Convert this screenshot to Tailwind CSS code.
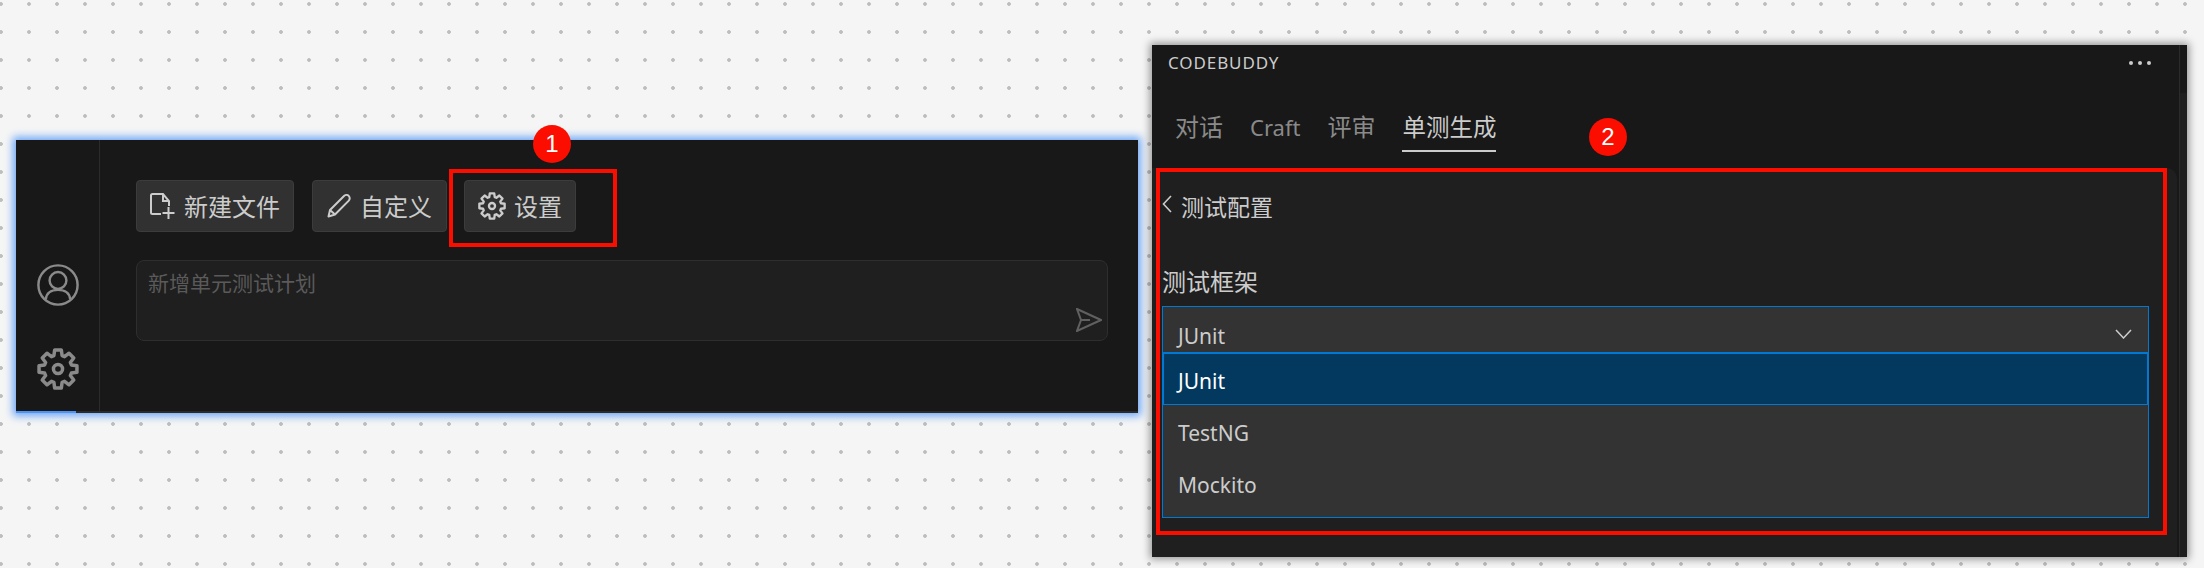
<!DOCTYPE html>
<html lang="zh-CN">
<head>
<meta charset="utf-8">
<title>CodeBuddy 单测生成</title>
<script src="https://cdn.jsdelivr.net/npm/@tailwindcss/browser@4"></script>
</head>
<body class="bg-[#f5f5f5]">
<div class="relative w-[2204px] h-[568px] overflow-hidden flex items-start font-['Noto_Sans','Noto_Sans_CJK_SC',sans-serif] bg-[radial-gradient(circle,#bdbdbd_1.5px,transparent_2.2px)] bg-[length:28px_28px] bg-[position:-13px_-10px]">

  <!-- Left panel -->
  <div class="relative ml-[16px] mt-[140px] w-[1122px] h-[273px] flex bg-[#181818] border-b-2 border-[#2b2b2b] shadow-[0_0_8px_3px_#6aa5f7]">
    <div class="w-[84px] flex flex-col items-center justify-end gap-[42px] pb-[21px] border-r border-[#2b2b2b]">
      <svg class="w-[42px] h-[42px] text-[#8a8a8a]" viewBox="0 0 24 24" fill="none" stroke="currentColor" stroke-width="1.4">
        <circle cx="12" cy="12" r="11.2"/>
        <circle cx="12" cy="9.4" r="4.8"/>
        <path d="M5 20.2C5.4 16.8 8 14.8 12 14.8S18.6 16.8 19 20.2"/>
      </svg>
      <svg class="w-[42px] h-[42px] text-[#8a8a8a]" viewBox="-12 -12 24 24" fill="none" stroke="currentColor" stroke-width="2" stroke-linejoin="round">
        <polygon points="-2.34,-7.65 -1.91,-10.83 1.91,-10.83 2.34,-7.65 3.75,-7.06 6.31,-9.01 9.01,-6.31 7.06,-3.75 7.65,-2.34 10.83,-1.91 10.83,1.91 7.65,2.34 7.06,3.75 9.01,6.31 6.31,9.01 3.75,7.06 2.34,7.65 1.91,10.83 -1.91,10.83 -2.34,7.65 -3.75,7.06 -6.31,9.01 -9.01,6.31 -7.06,3.75 -7.65,2.34 -10.83,1.91 -10.83,-1.91 -7.65,-2.34 -7.06,-3.75 -9.01,-6.31 -6.31,-9.01 -3.75,-7.06"/>
        <circle r="2.6"/>
      </svg>
    </div>
    <div class="flex-1 pl-[36px] pr-[30px] pt-[40px]">
      <div class="flex gap-[18px] text-[24px] leading-8 text-[#cccccc]">
        <div class="w-[158px] h-[52px] flex items-center justify-center gap-[9px] bg-[#313131] border border-[#3c3c3c] rounded-[4px]">
          <svg class="w-[25px] h-[27px]" viewBox="0 0 25 27" fill="none" stroke="currentColor" stroke-width="2">
            <path d="M11 21H2.500A1.500 1.500 0 0 1 1 19.500V2.500A1.500 1.500 0 0 1 2.500 1H13L19 8V13M13 1V8H19M18.500 14V26M12.500 20H24.500"/>
          </svg>
          <span class="mt-[1px]">新建文件</span>
        </div>
        <div class="w-[135px] h-[52px] flex items-center justify-center gap-[9px] bg-[#313131] border border-[#3c3c3c] rounded-[4px]">
          <svg class="w-[24px] h-[24px]" viewBox="0 0 24 24" fill="none" stroke="currentColor" stroke-width="2" stroke-linejoin="round">
            <path d="M1.500 22.500L3 16L17 2A3.200 3.200 0 0 1 21.800 6.600L8 20.500ZM3 16L8 20.500"/>
          </svg>
          <span class="mt-[1px]">自定义</span>
        </div>
        <div class="-ml-px w-[112px] h-[52px] flex items-center justify-center gap-[8px] bg-[#313131] border border-[#3c3c3c] rounded-[4px]">
          <svg class="w-[28px] h-[28px]" viewBox="-12 -12 24 24" fill="none" stroke="currentColor" stroke-width="2" stroke-linejoin="round">
            <polygon points="-2.34,-7.65 -1.91,-10.83 1.91,-10.83 2.34,-7.65 3.75,-7.06 6.31,-9.01 9.01,-6.31 7.06,-3.75 7.65,-2.34 10.83,-1.91 10.83,1.91 7.65,2.34 7.06,3.75 9.01,6.31 6.31,9.01 3.75,7.06 2.34,7.65 1.91,10.83 -1.91,10.83 -2.34,7.65 -3.75,7.06 -6.31,9.01 -9.01,6.31 -7.06,3.75 -7.65,2.34 -10.83,1.91 -10.83,-1.91 -7.65,-2.34 -7.06,-3.75 -9.01,-6.31 -6.31,-9.01 -3.75,-7.06"/>
            <circle r="2.6"/>
          </svg>
          <span class="mt-[1px]">设置</span>
        </div>
      </div>
      <div class="relative mt-[28px] h-[81px] bg-[#1f1f1f] border border-[#2e2e2e] rounded-[8px] pl-[11px] pt-[7px] text-[21px] leading-[30px] text-[#5a5a5a]">
        新增单元测试计划
        <svg class="absolute right-[5px] bottom-[8px] w-[26px] h-[24px] text-[#606060]" viewBox="0 0 26 24" fill="none" stroke="currentColor" stroke-width="2">
          <path d="M1 1L25 12L1 23L5 12ZM5 12H14"/>
        </svg>
      </div>
    </div>
    <div class="absolute left-0 -bottom-[2px] w-[60px] h-[2px] bg-[#4d94f5]"></div>
  </div>

  <!-- Right panel -->
  <div class="ml-[14px] mt-[45px] w-[1035px] h-[512px] flex bg-[#181818] shadow-[0_0_8px_2px_#00000066]">
    <div class="w-[1025px] flex flex-col">
      <div class="h-[123px] shrink-0">
        <div class="h-9 flex items-center justify-between pl-[16px] text-[17px] text-[#cccccc]">
          <span class="tracking-[0.9px]">CODEBUDDY</span>
          <div class="flex gap-[5px] mr-[26px]">
            <span class="w-1 h-1 rounded-full bg-[#cccccc]"></span>
            <span class="w-1 h-1 rounded-full bg-[#cccccc]"></span>
            <span class="w-1 h-1 rounded-full bg-[#cccccc]"></span>
          </div>
        </div>
        <div class="mt-[30px] pl-[23px] flex gap-[27px] text-[24px] leading-8 text-[#8a8a8a]">
          <span class="pb-[9px]">对话</span>
          <span class="pb-[9px] text-[22px]">Craft</span>
          <span class="pb-[9px]">评审</span>
          <span class="pb-[7px] text-[23.500px] text-[#cccccc] border-b-2 border-[#cccccc]">单测生成</span>
        </div>
      </div>
      <div class="flex-1 bg-[#1f1f1f] rounded-tr-[10px] pl-[10px] text-[#cccccc]">
        <div class="pt-[23px] flex items-center gap-[9px] text-[23px] leading-8">
          <svg class="w-[10px] h-[18px] -mt-[6px]" viewBox="0 0 10 18" fill="none" stroke="currentColor" stroke-width="1.600"><path d="M9 1L1.500 9L9 17"/></svg>
          <span>测试配置</span>
        </div>
        <div class="mt-[43px] mb-[8px] text-[24px] leading-8">测试框架</div>
        <div class="w-[987px] h-[212px] bg-[#333333] border border-[#0078d4] text-[21px] leading-9">
          <div class="h-[45px] pt-[12px] pl-[15px] pr-[16px] flex justify-between items-center">
            <span>JUnit</span>
            <svg class="w-[17px] h-[10px] -mt-[3px]" viewBox="0 0 17 10" fill="none" stroke="currentColor" stroke-width="1.500"><path d="M1 1L8.500 9L16 1"/></svg>
          </div>
          <div class="h-[53px] pl-[14px] pt-[3px] flex items-center bg-[#03395e] border border-t-2 border-[#0078d4] text-white">JUnit</div>
          <div class="h-[52px] pl-[15px] pt-[3px] flex items-center">TestNG</div>
          <div class="h-[53px] pl-[15px] pt-[3px] flex items-center">Mockito</div>
        </div>
      </div>
    </div>
    <div class="ml-[2px] flex-1 flex flex-col border-l border-[#2b2b2b]">
      <div class="h-[48px]"></div>
      <div class="flex-1 bg-[#1e1e1e]"></div>
    </div>
  </div>

  <!-- Annotations -->
  <div class="absolute left-[449px] top-[169px] w-[168px] h-[78px] border-4 border-[#fb0d00]"></div>
  <div class="absolute left-[533px] top-[125px] w-[38px] h-[38px] rounded-full bg-[#fb0d00] flex items-center justify-center text-white text-[24px] font-['Liberation_Sans',sans-serif]">1</div>
  <div class="absolute left-[1156px] top-[168px] w-[1011px] h-[367px] border-4 border-[#fb0d00]"></div>
  <div class="absolute left-[1589px] top-[118px] w-[38px] h-[38px] rounded-full bg-[#fb0d00] flex items-center justify-center text-white text-[24px] font-['Liberation_Sans',sans-serif]">2</div>
</div>
</body>
</html>
